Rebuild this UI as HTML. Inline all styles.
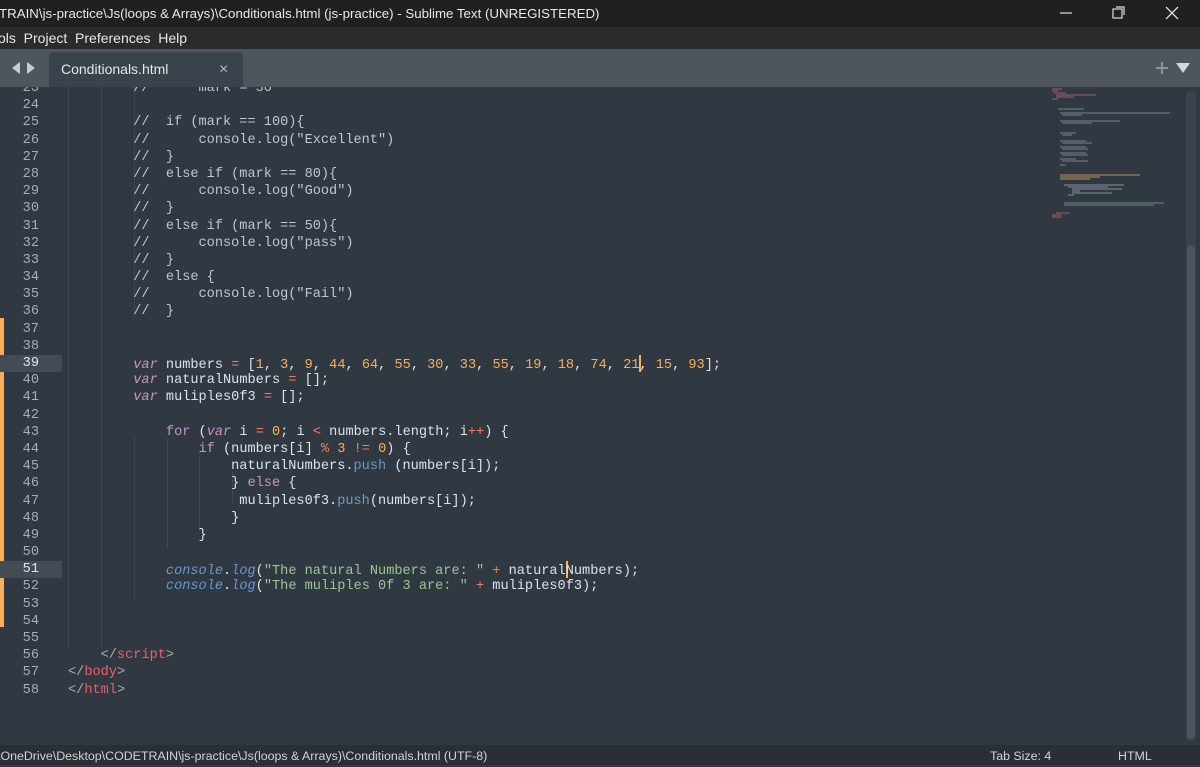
<!DOCTYPE html>
<html><head><meta charset="utf-8"><style>
*{margin:0;padding:0;box-sizing:border-box}
body{width:1200px;height:765px;overflow:hidden;background:#303841;font-family:"Liberation Sans",sans-serif;position:relative}
#title{position:absolute;left:0;top:0;width:1200px;height:27px;background:#202020;color:#e8e8e8;font-size:13.3px;line-height:27px;white-space:nowrap}
#menu{position:absolute;left:0;top:27px;width:1200px;height:22px;background:#2b2b2b;color:#e8e8e8;font-size:14px;line-height:22px;white-space:nowrap}
#tabs{position:absolute;left:0;top:49px;width:1200px;height:38px;background:#4e555d}
#tab{position:absolute;left:49px;top:3px;width:194px;height:35px;background:#3a424b;border-radius:4px 4px 0 0;color:#e6e6e6;font-size:14px;line-height:35px;padding-left:12px}
#editor{position:absolute;left:0;top:87px;width:1200px;height:658px;overflow:hidden;background:#303841}
#code{position:absolute;left:0;top:-7px;font-family:"Liberation Mono",monospace;font-size:13.6px;color:#dde2ea}
.l{height:17.2px;line-height:17.2px;white-space:pre;position:relative}
.ln{position:absolute;left:0;width:39px;text-align:right;color:#a6acb9}
.tx{position:absolute;left:68px}
.hl .ln{color:#e0e4ea}
.hlbg{position:absolute;left:0;width:62px;height:17.2px;background:#434c55}
.k{color:#c695c6}.v{color:#c695c6;font-style:italic}.n{color:#f9ae58}.o{color:#f97b58}.s{color:#99c794}.f{color:#6699cc}.c{color:#6699cc;font-style:italic}.t{color:#ec5f66}.g{color:#a6acb9}.cm{color:#c0c5ce}
.guide{position:absolute;width:0;border-left:1px dotted #4d5661}
#status{position:absolute;left:0;top:745px;width:1200px;height:20px;background:#2a2f36;color:#d0d3d8;font-size:12.4px;line-height:22px;white-space:nowrap}
.cur{display:inline-block;width:0;border-left:2px solid #f9ae58;height:17px;vertical-align:-4px;margin-right:-2px}
</style></head><body>
<div id="title"><span style="margin-left:-1px">TRAIN\js-practice\Js(loops &amp; Arrays)\Conditionals.html (js-practice) - Sublime Text (UNREGISTERED)</span>
<svg style="position:absolute;left:1050px;top:0" width="150" height="27"><line x1="10" y1="13" x2="22" y2="13" stroke="#ddd" stroke-width="1.2"/><rect x="63" y="9" width="9" height="9" fill="none" stroke="#ddd" stroke-width="1.2"/><path d="M66 7h8v8" fill="none" stroke="#ddd" stroke-width="1.2"/><path d="M116 7l12 12M128 7l-12 12" stroke="#ddd" stroke-width="1.3"/></svg>
</div>
<div id="menu"><span style="margin-left:-2px">ols&nbsp;&nbsp;Project&nbsp;&nbsp;Preferences&nbsp;&nbsp;Help</span></div>
<div id="tabs">
<svg style="position:absolute;left:10px;top:12px" width="30" height="14"><path d="M10 1L2 7l8 6z" fill="#c8ccd0"/><path d="M17 1l8 6-8 6z" fill="#c8ccd0"/></svg>
<div id="tab">Conditionals.html<span style="position:absolute;left:170px;color:#b8bcc0;font-size:16px">×</span></div>
<svg style="position:absolute;left:1150px;top:10px" width="50" height="18"><path d="M12 3v12M6 9h12" stroke="#8d939a" stroke-width="2"/><path d="M26 4h14l-7 10z" fill="#d6d9dc"/></svg>
</div>
<div id="editor">
<div style="position:absolute;left:0;top:231px;width:4px;height:309px;background:#f9ae58"></div>
<div class="guide" style="left:68px;top:0;height:560px"></div>
<div class="guide" style="left:101px;top:0;height:560px"></div>
<div class="guide" style="left:134px;top:0;height:230px"></div>
<div class="guide" style="left:134px;top:352px;height:160px"></div>
<div class="guide" style="left:167px;top:352px;height:110px"></div>
<div class="guide" style="left:199px;top:369px;height:75px"></div>
<div class="guide" style="left:232px;top:386px;height:30px"></div>
<div id="code">
<div class="l"><span class="ln">23</span><span class="tx">        <span class="cm">//      mark = 50</span></span></div>
<div class="l"><span class="ln">24</span></div>
<div class="l"><span class="ln">25</span><span class="tx cm">        //  if (mark == 100){</span></div>
<div class="l"><span class="ln">26</span><span class="tx cm">        //      console.log("Excellent")</span></div>
<div class="l"><span class="ln">27</span><span class="tx cm">        //  }</span></div>
<div class="l"><span class="ln">28</span><span class="tx cm">        //  else if (mark == 80){</span></div>
<div class="l"><span class="ln">29</span><span class="tx cm">        //      console.log("Good")</span></div>
<div class="l"><span class="ln">30</span><span class="tx cm">        //  }</span></div>
<div class="l"><span class="ln">31</span><span class="tx cm">        //  else if (mark == 50){</span></div>
<div class="l"><span class="ln">32</span><span class="tx cm">        //      console.log("pass")</span></div>
<div class="l"><span class="ln">33</span><span class="tx cm">        //  }</span></div>
<div class="l"><span class="ln">34</span><span class="tx cm">        //  else {</span></div>
<div class="l"><span class="ln">35</span><span class="tx cm">        //      console.log("Fail")</span></div>
<div class="l"><span class="ln">36</span><span class="tx cm">        //  }</span></div>
<div class="l"><span class="ln">37</span></div>
<div class="l"><span class="ln">38</span></div>
<div class="l hl"><span class="hlbg"></span><span class="ln">39</span><span class="tx">        <span class="v">var</span> numbers <span class="o">=</span> [<span class="n">1</span>, <span class="n">3</span>, <span class="n">9</span>, <span class="n">44</span>, <span class="n">64</span>, <span class="n">55</span>, <span class="n">30</span>, <span class="n">33</span>, <span class="n">55</span>, <span class="n">19</span>, <span class="n">18</span>, <span class="n">74</span>, <span class="n">21</span><span class="cur"></span>, <span class="n">15</span>, <span class="n">93</span>];</span></div>
<div class="l"><span class="ln">40</span><span class="tx">        <span class="v">var</span> naturalNumbers <span class="o">=</span> [];</span></div>
<div class="l"><span class="ln">41</span><span class="tx">        <span class="v">var</span> muliples0f3 <span class="o">=</span> [];</span></div>
<div class="l"><span class="ln">42</span></div>
<div class="l"><span class="ln">43</span><span class="tx">            <span class="k">for</span> (<span class="v">var</span> i <span class="o">=</span> <span class="n">0</span>; i <span class="o">&lt;</span> numbers.length; i<span class="o">++</span>) {</span></div>
<div class="l"><span class="ln">44</span><span class="tx">                <span class="k">if</span> (numbers[i] <span class="o">%</span> <span class="n">3</span> <span class="o">!=</span> <span class="n">0</span>) {</span></div>
<div class="l"><span class="ln">45</span><span class="tx">                    naturalNumbers.<span class="f">push</span> (numbers[i]);</span></div>
<div class="l"><span class="ln">46</span><span class="tx">                    } <span class="k">else</span> {</span></div>
<div class="l"><span class="ln">47</span><span class="tx">                     muliples0f3.<span class="f">push</span>(numbers[i]);</span></div>
<div class="l"><span class="ln">48</span><span class="tx">                    }</span></div>
<div class="l"><span class="ln">49</span><span class="tx">                }</span></div>
<div class="l"><span class="ln">50</span></div>
<div class="l hl"><span class="hlbg"></span><span class="ln">51</span><span class="tx">            <span class="c">console</span>.<span class="c">log</span>(<span class="s">"The natural Numbers are: "</span> <span class="o">+</span> natural<span class="cur"></span>Numbers);</span></div>
<div class="l"><span class="ln">52</span><span class="tx">            <span class="c">console</span>.<span class="c">log</span>(<span class="s">"The muliples 0f 3 are: "</span> <span class="o">+</span> muliples0f3);</span></div>
<div class="l"><span class="ln">53</span></div>
<div class="l"><span class="ln">54</span></div>
<div class="l"><span class="ln">55</span></div>
<div class="l"><span class="ln">56</span><span class="tx">    <span class="g">&lt;/</span><span class="t">script</span><span class="g">&gt;</span></span></div>
<div class="l"><span class="ln">57</span><span class="tx"><span class="g">&lt;/</span><span class="t">body</span><span class="g">&gt;</span></span></div>
<div class="l"><span class="ln">58</span><span class="tx"><span class="g">&lt;/</span><span class="t">html</span><span class="g">&gt;</span></span></div>
</div>
<svg style="position:absolute;left:1050px;top:0" width="130" height="140" opacity="0.8">
<g stroke-width="1.2">
<path d="M2 2h10M2 4h6M4 6h12M6 8h40M6 10h18M2 12h6" stroke="#a06068"/>
<path d="M8 22h26M10 26h110M12 28h20M10 34h60M12 36h30" stroke="#7a8490"/>
<path d="M10 46h16M12 48h10M10 54h26M12 56h30M10 60h26M12 62h26M10 66h26M12 68h26M10 72h16M12 74h26M10 78h6" stroke="#7a8490"/>
<path d="M10 88h80M10 90h40M10 92h30" stroke="#b89060"/>
<path d="M14 98h60M18 100h40M22 102h50M22 104h8M22 106h40M18 108h6" stroke="#8890a0"/>
<path d="M14 116h100M14 118h90" stroke="#708a80"/>
<path d="M6 126h14M2 128h10M2 130h10" stroke="#a06068"/>
</g></svg>
<div style="position:absolute;left:1186px;top:4px;width:10px;height:650px;background:#3a424b;border-radius:4px"></div>
<div style="position:absolute;left:1187px;top:158px;width:8px;height:494px;background:#4b545e;border-radius:4px"></div>
</div>
<div id="status"><span style="margin-left:-3px">\OneDrive\Desktop\CODETRAIN\js-practice\Js(loops &amp; Arrays)\Conditionals.html (UTF-8)</span><span style="position:absolute;left:990px">Tab Size: 4</span><span style="position:absolute;left:1118px">HTML</span></div>
</body></html>
